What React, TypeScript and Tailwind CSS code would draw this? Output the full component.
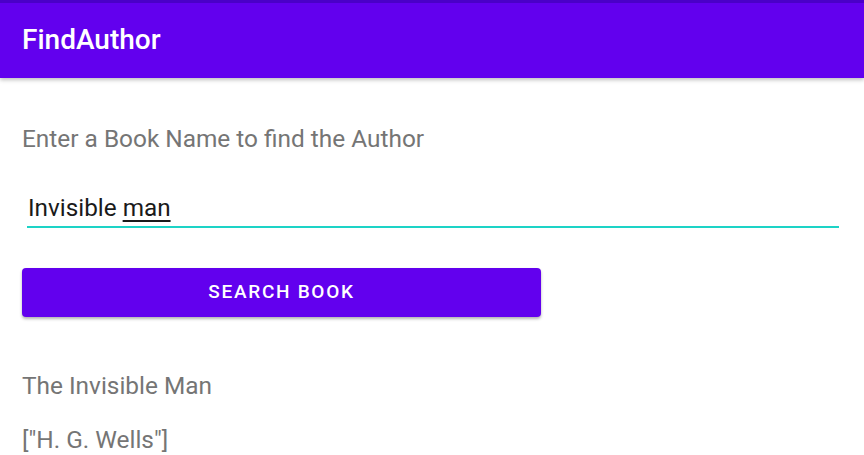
import React from "react";

export default function App() {
  return (
    <div
      className="w-[864px] h-[455px] bg-white overflow-hidden"
      style={{ fontFamily: "Roboto, 'Liberation Sans', sans-serif" }}
    >
      <div className="h-[78px] bg-[#6200ee] border-t-[3px] border-[#4a00c8] shadow-[0_2px_4px_rgba(0,0,0,0.25)] flex items-center pl-[22px] relative z-10">
        <span className="text-white text-[28px] font-medium leading-none pb-[2px]">FindAuthor</span>
      </div>
      <div className="px-[22px] flex flex-col">
        <div className="mt-[47px] text-[24.4px] text-[#757575] leading-[28px]">
          Enter a Book Name to find the Author
        </div>
        <div className="mt-[41px] ml-[5px] w-[812px] border-b-2 border-[#1dd3c6] pb-[3px]">
          <span className="text-[24.3px] text-[#1a1a1a] leading-[28px] pl-[1px]">
            Invisible <span className="underline underline-offset-[4px] decoration-[1.5px]">man</span>
          </span>
        </div>
        <button className="mt-[40px] w-[519px] h-[49px] rounded-[4px] bg-[#6200ee] text-white text-[19px] font-medium tracking-[1.7px] shadow-[0_2px_3px_rgba(0,0,0,0.3)] flex items-center justify-center">
          SEARCH BOOK
        </button>
        <div className="mt-[55px] text-[24.4px] text-[#757575] leading-[28px]">The Invisible Man</div>
        <div className="mt-[26px] text-[24.4px] text-[#757575] leading-[28px]">["H. G. Wells"]</div>
      </div>
    </div>
  );
}
